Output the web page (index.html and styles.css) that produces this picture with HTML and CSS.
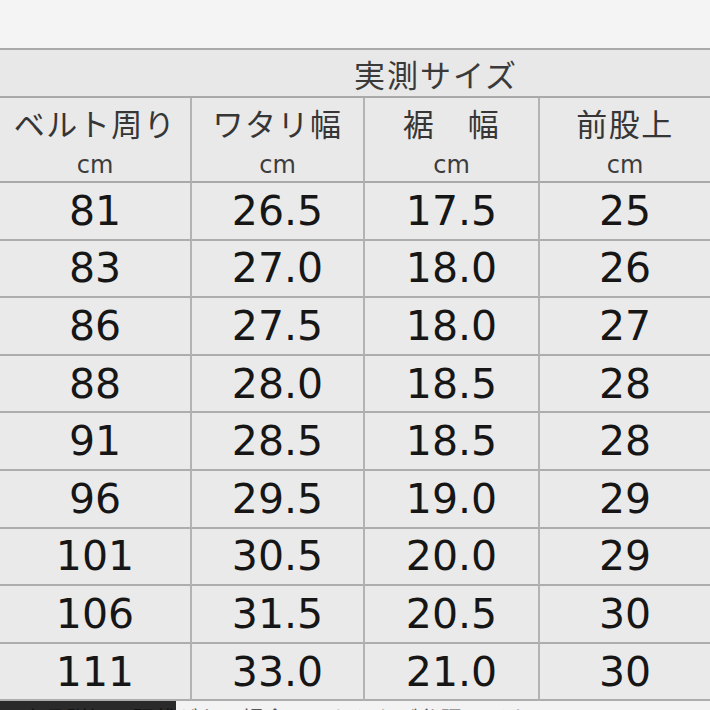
FILE: index.html
```html
<!DOCTYPE html>
<html lang="ja">
<head>
<meta charset="utf-8">
<link rel="stylesheet" href="styles.css">
</head>
<body>
<div class="page">
  <div class="top"></div>
  <div class="table">
    <div class="title">実測サイズ</div>
    <div class="head"><span class="jp">ベルト周り</span><span class="unit">cm</span></div>
    <div class="head"><span class="jp">ワタリ幅</span><span class="unit">cm</span></div>
    <div class="head"><span class="jp">裾　幅</span><span class="unit">cm</span></div>
    <div class="head last"><span class="jp">前股上</span><span class="unit">cm</span></div>

    <div class="cell">81</div><div class="cell">26.5</div><div class="cell">17.5</div><div class="cell last">25</div>
    <div class="cell">83</div><div class="cell">27.0</div><div class="cell">18.0</div><div class="cell last">26</div>
    <div class="cell">86</div><div class="cell">27.5</div><div class="cell">18.0</div><div class="cell last">27</div>
    <div class="cell">88</div><div class="cell">28.0</div><div class="cell">18.5</div><div class="cell last">28</div>
    <div class="cell">91</div><div class="cell">28.5</div><div class="cell">18.5</div><div class="cell last">28</div>
    <div class="cell">96</div><div class="cell">29.5</div><div class="cell">19.0</div><div class="cell last">29</div>
    <div class="cell">101</div><div class="cell">30.5</div><div class="cell">20.0</div><div class="cell last">29</div>
    <div class="cell">106</div><div class="cell">31.5</div><div class="cell">20.5</div><div class="cell last">30</div>
    <div class="cell">111</div><div class="cell">33.0</div><div class="cell">21.0</div><div class="cell last">30</div>
  </div>
  <div class="note"><span class="mark">※商品詳細に記載</span>がない場合はこちらをご参照ください</div>
</div>
</body>
</html>
```
FILE: styles.css
```css
html, body {
  margin: 0;
  padding: 0;
  background: #f3f3f3;
  overflow: hidden;
}
.page {
  width: 710px;
  height: 710px;
  overflow: hidden;
  background: #f3f3f3;
}
.top {
  height: 48px;
  background: #f4f4f4;
}
.table {
  display: grid;
  grid-template-columns: 192px 173px 175px 170px;
  grid-template-rows: 48px 85px repeat(9, 57.6px);
  border-top: 2px solid #a9a9a9;
  background: #e9e9e9;
}
.title {
  grid-column: 1 / 5;
  border-bottom: 2px solid #a9a9a9;
  display: flex;
  align-items: center;
  padding-left: 354px;
  font-family: "Noto Sans CJK JP", sans-serif;
  font-size: 31px;
  letter-spacing: 2px;
  color: #3a3a3a;
  background: #e8e8e8;
}
.head {
  border-bottom: 2px solid #a9a9a9;
  border-right: 2px solid #b3b3b3;
  display: flex;
  flex-direction: column;
  align-items: center;
  background: #e9e9e9;
}
.head .jp {
  font-family: "Noto Sans CJK JP", sans-serif;
  font-size: 31px;
  line-height: 44px;
  margin-top: 3px;
  letter-spacing: 1.5px;
  color: #363636;
}
.head .unit {
  font-family: "DejaVu Sans", sans-serif;
  font-size: 24px;
  line-height: 30px;
  margin-top: 5px;
  color: #3c3c3c;
}
.cell {
  border-bottom: 2px solid #adadad;
  border-right: 2px solid #b3b3b3;
  display: flex;
  align-items: center;
  justify-content: center;
  font-family: "DejaVu Sans", sans-serif;
  font-size: 41px;
  color: #161616;
  background: #eaeaea;
}
.last {
  border-right: none;
}
.note {
  margin-top: 1px;
  font-family: "Noto Sans CJK JP", sans-serif;
  font-size: 22px;
  line-height: 30px;
  color: #555;
  white-space: nowrap;
}
.note .mark {
  background: #2a2a2a;
  color: #111;
}
```
